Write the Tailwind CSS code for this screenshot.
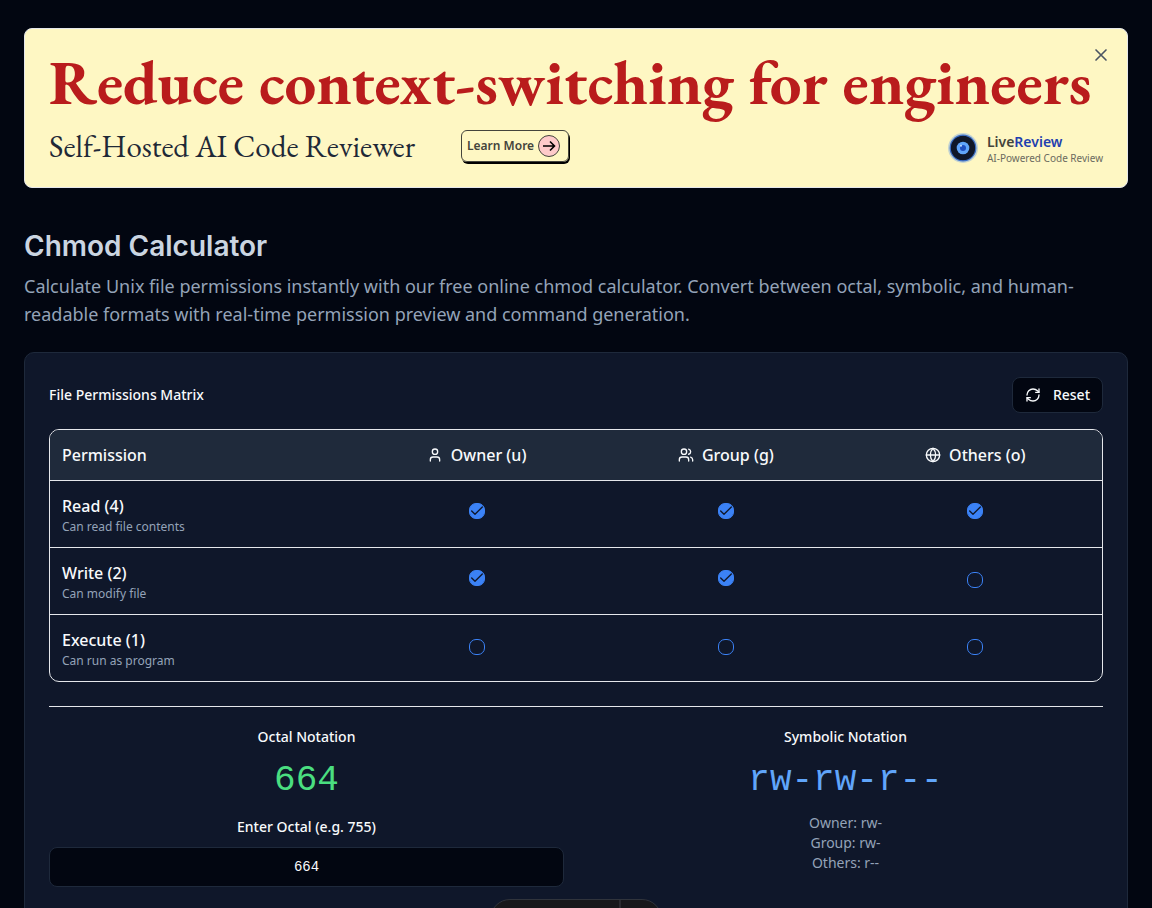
<!DOCTYPE html>
<html lang="en">
<head>
<meta charset="utf-8">
<meta name="viewport" content="width=device-width, initial-scale=1">
<title>Chmod Calculator</title>
<script src="https://cdn.jsdelivr.net/npm/@tailwindcss/browser@4"></script>
</head>
<body class="bg-[#020611] text-slate-50 font-['Noto_Sans',sans-serif] h-screen overflow-hidden">
<main class="px-6 pt-7">
  <section class="relative rounded-lg border border-gray-200 bg-[#fef7c3] px-6 pt-6 pb-[21px]">
    <h2 class="font-['EB_Garamond','Liberation_Serif',serif] font-bold text-[63px] leading-[58px] text-[#b91c1c] whitespace-nowrap">Reduce context-switching for engineers</h2>
    <div class="flex items-center mt-[15px]">
      <p class="font-['EB_Garamond','Liberation_Serif',serif] text-[31px] leading-9 text-[#1f2937] w-[412px]">Self-Hosted AI Code Reviewer</p>
      <a href="#" class="flex h-8 items-center gap-1 rounded-md border border-[#44443c] pl-[5px] pr-2 text-xs font-semibold text-[#44443c] shadow-[1px_2px_0_0_#000]">Learn More
        <span class="grid size-[22px] place-items-center rounded-full border border-[#44443c] bg-[#fecaca]">
          <svg class="size-4" viewBox="0 0 16 16" fill="none" stroke="#000" stroke-width="1.6"><path d="M2 8h11.500M9 3.500 13.500 8 9 12.500"/></svg>
        </span>
      </a>
      <div class="mt-2 ml-auto flex items-center gap-2">
        <svg class="-mt-1 size-8" viewBox="0 0 32 32">
          <circle cx="16" cy="16" r="15" fill="#3b82f6" opacity=".3"/>
          <circle cx="16" cy="16" r="12.800" fill="#0f172a" stroke="#3b6fc9" stroke-width="1.200"/>
          <circle cx="16" cy="16" r="6.300" fill="#60a5fa"/>
          <circle cx="16" cy="16" r="3" fill="#1e4fc0"/>
          <circle cx="14" cy="13.800" r="1" fill="#bfdbfe"/>
        </svg>
        <div>
          <div class="text-sm leading-4 font-semibold text-[#44443c]">Live<span class="text-[#1e40af]">Review</span></div>
          <div class="text-[10px] leading-4 text-[#6b6b60]">AI-Powered Code Review</div>
        </div>
      </div>
    </div>
    <button type="button" aria-label="Close" class="absolute top-4 right-4 grid size-5 place-items-center text-[#4b5563]">
      <svg class="size-5" viewBox="0 0 24 24" fill="none" stroke="currentColor" stroke-width="2" stroke-linecap="round"><path d="M18 6 6 18M6 6l12 12"/></svg>
    </button>
  </section>

  <header class="mt-10">
    <h1 class="font-['Gilroy','Inter',sans-serif] text-[28px] leading-9 font-semibold text-[#cbd5e1]">Chmod Calculator</h1>
    <p class="mt-2 text-lg leading-7 text-[#94a3b8]">Calculate Unix file permissions instantly with our free online chmod calculator. Convert between octal, symbolic, and human-readable formats with real-time permission preview and command generation.</p>
  </header>

  <section class="mt-6 rounded-[10px] border border-[#1e293b] bg-[#0f172a] px-6 pt-6 pb-12">
    <div class="flex items-center justify-between">
      <h3 class="text-sm font-medium">File Permissions Matrix</h3>
      <button type="button" class="flex h-9 items-center gap-3 rounded-lg border border-[#1e293b] bg-[#020611] px-3 text-sm font-medium">
        <svg class="size-4" viewBox="0 0 24 24" fill="none" stroke="currentColor" stroke-width="2" stroke-linecap="round" stroke-linejoin="round"><path d="M3 12a9 9 0 0 1 9-9 9.750 9.750 0 0 1 6.740 2.740L21 8"/><path d="M21 3v5h-5"/><path d="M21 12a9 9 0 0 1-9 9 9.750 9.750 0 0 1-6.740-2.740L3 16"/><path d="M8 16H3v5"/></svg>
        Reset
      </button>
    </div>

    <div class="mt-4 overflow-hidden rounded-[10px] border border-gray-200">
      <table class="w-full table-fixed border-collapse">
        <colgroup><col class="w-[28.7%]"><col class="w-[23.7%]"><col class="w-[23.7%]"><col class="w-[23.9%]"></colgroup>
        <thead>
          <tr class="h-[50px] border-b border-gray-200 bg-[#1f2a3b]">
            <th scope="col" class="px-3 text-left font-medium">Permission</th>
            <th scope="col" class="font-medium"><span class="flex items-center justify-center gap-2"><svg class="size-4" viewBox="0 0 24 24" fill="none" stroke="currentColor" stroke-width="2" stroke-linecap="round" stroke-linejoin="round"><path d="M19 21v-2a4 4 0 0 0-4-4H9a4 4 0 0 0-4 4v2"/><circle cx="12" cy="7" r="4"/></svg>Owner (u)</span></th>
            <th scope="col" class="font-medium"><span class="flex items-center justify-center gap-2"><svg class="size-4" viewBox="0 0 24 24" fill="none" stroke="currentColor" stroke-width="2" stroke-linecap="round" stroke-linejoin="round"><path d="M16 21v-2a4 4 0 0 0-4-4H6a4 4 0 0 0-4 4v2"/><circle cx="9" cy="7" r="4"/><path d="M22 21v-2a4 4 0 0 0-3-3.870"/><path d="M16 3.130a4 4 0 0 1 0 7.750"/></svg>Group (g)</span></th>
            <th scope="col" class="pr-0.5 font-medium"><span class="flex items-center justify-center gap-2"><svg class="size-4" viewBox="0 0 24 24" fill="none" stroke="currentColor" stroke-width="2" stroke-linecap="round" stroke-linejoin="round"><circle cx="12" cy="12" r="10"/><path d="M12 2a14.500 14.500 0 0 0 0 20 14.500 14.500 0 0 0 0-20"/><path d="M2 12h20"/></svg>Others (o)</span></th>
          </tr>
        </thead>
        <tbody>
          <tr class="h-[67px] border-b border-gray-200">
            <th scope="row" class="px-3 pt-0.5 text-left font-normal"><div class="font-medium leading-6">Read (4)</div><div class="mt-px text-xs text-[#94a3b8]">Can read file contents</div></th>
            <td><label class="mb-[6px] grid place-items-center"><input type="checkbox" checked aria-label="Owner read" class="[grid-area:1/1] size-4 appearance-none rounded-[7px] border border-[#3b82f6] checked:bg-[#3b82f6]"><svg class="pointer-events-none [grid-area:1/1] size-4" viewBox="0 0 24 24" fill="none" stroke="#0f172a" stroke-width="2" stroke-linecap="round" stroke-linejoin="round"><path d="M20 6 9 17l-5-5"/></svg></label></td>
            <td><label class="mb-[6px] grid place-items-center"><input type="checkbox" checked aria-label="Group read" class="[grid-area:1/1] size-4 appearance-none rounded-[7px] border border-[#3b82f6] checked:bg-[#3b82f6]"><svg class="pointer-events-none [grid-area:1/1] size-4" viewBox="0 0 24 24" fill="none" stroke="#0f172a" stroke-width="2" stroke-linecap="round" stroke-linejoin="round"><path d="M20 6 9 17l-5-5"/></svg></label></td>
            <td class="pr-0.5"><label class="mb-[6px] grid place-items-center"><input type="checkbox" checked aria-label="Others read" class="[grid-area:1/1] size-4 appearance-none rounded-[7px] border border-[#3b82f6] checked:bg-[#3b82f6]"><svg class="pointer-events-none [grid-area:1/1] size-4" viewBox="0 0 24 24" fill="none" stroke="#0f172a" stroke-width="2" stroke-linecap="round" stroke-linejoin="round"><path d="M20 6 9 17l-5-5"/></svg></label></td>
          </tr>
          <tr class="h-[67px] border-b border-gray-200">
            <th scope="row" class="px-3 pt-0.5 text-left font-normal"><div class="font-medium leading-6">Write (2)</div><div class="mt-px text-xs text-[#94a3b8]">Can modify file</div></th>
            <td><label class="mb-[6px] grid place-items-center"><input type="checkbox" checked aria-label="Owner write" class="[grid-area:1/1] size-4 appearance-none rounded-[7px] border border-[#3b82f6] checked:bg-[#3b82f6]"><svg class="pointer-events-none [grid-area:1/1] size-4" viewBox="0 0 24 24" fill="none" stroke="#0f172a" stroke-width="2" stroke-linecap="round" stroke-linejoin="round"><path d="M20 6 9 17l-5-5"/></svg></label></td>
            <td><label class="mb-[6px] grid place-items-center"><input type="checkbox" checked aria-label="Group write" class="[grid-area:1/1] size-4 appearance-none rounded-[7px] border border-[#3b82f6] checked:bg-[#3b82f6]"><svg class="pointer-events-none [grid-area:1/1] size-4" viewBox="0 0 24 24" fill="none" stroke="#0f172a" stroke-width="2" stroke-linecap="round" stroke-linejoin="round"><path d="M20 6 9 17l-5-5"/></svg></label></td>
            <td class="pr-0.5"><label class="mb-[2px] grid place-items-center"><input type="checkbox" aria-label="Others write" class="size-4 appearance-none rounded-[7px] border border-[#3b82f6] checked:bg-[#3b82f6]"></label></td>
          </tr>
          <tr class="h-[67px]">
            <th scope="row" class="px-3 pt-0.5 text-left font-normal"><div class="font-medium leading-6">Execute (1)</div><div class="mt-px text-xs text-[#94a3b8]">Can run as program</div></th>
            <td><label class="mb-[2px] grid place-items-center"><input type="checkbox" aria-label="Owner execute" class="size-4 appearance-none rounded-[7px] border border-[#3b82f6] checked:bg-[#3b82f6]"></label></td>
            <td><label class="mb-[2px] grid place-items-center"><input type="checkbox" aria-label="Group execute" class="size-4 appearance-none rounded-[7px] border border-[#3b82f6] checked:bg-[#3b82f6]"></label></td>
            <td class="pr-0.5"><label class="mb-[2px] grid place-items-center"><input type="checkbox" aria-label="Others execute" class="size-4 appearance-none rounded-[7px] border border-[#3b82f6] checked:bg-[#3b82f6]"></label></td>
          </tr>
        </tbody>
      </table>
    </div>

    <div class="mt-6 grid grid-cols-2 gap-6 border-t border-gray-200 pt-5 text-center">
      <div>
        <h4 class="text-sm font-medium">Octal Notation</h4>
        <div class="mt-[14px] font-['Liberation_Mono',monospace] text-4xl leading-10 text-[#4ade80]">664</div>
        <label for="octal" class="mt-4 block text-sm font-medium">Enter Octal (e.g. 755)</label>
        <input id="octal" type="text" value="664" class="mt-[10px] block h-10 w-full rounded-lg border border-[#1e293b] bg-[#020611] px-3 text-center font-['Liberation_Mono',monospace] text-sm">
      </div>
      <div>
        <h4 class="text-sm font-medium">Symbolic Notation</h4>
        <div class="mt-[14px] font-['Liberation_Mono',monospace] text-4xl leading-10 text-[#60a5fa]">rw-rw-r--</div>
        <div class="mt-3 text-sm leading-5 text-[#94a3b8]">
          <p>Owner: rw-</p>
          <p>Group: rw-</p>
          <p>Others: r--</p>
        </div>
      </div>
    </div>
  </section>
</main>
<div class="fixed -bottom-8 left-1/2 flex h-[41px] w-[172px] -translate-x-1/2 overflow-hidden rounded-[20px] border border-[#30343c] bg-[#18181b]">
  <div class="w-[130px] border-r-2 border-[#2b2b30]"></div>
</div>
</body>
</html>
